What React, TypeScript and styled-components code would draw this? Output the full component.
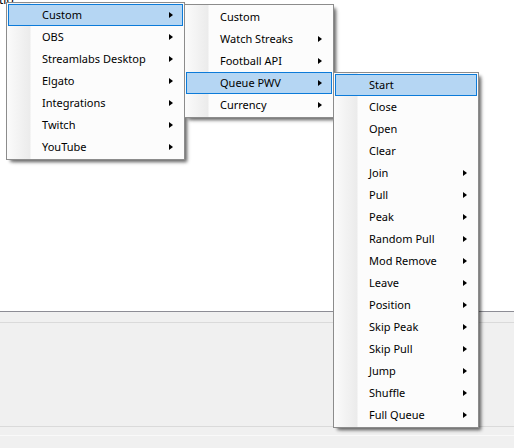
import React from 'react';
import styled, { createGlobalStyle } from 'styled-components';

const Global = createGlobalStyle`
  html, body { margin: 0; padding: 0; }
  body {
    width: 514px;
    height: 448px;
    overflow: hidden;
    font-family: "Segoe UI", "Noto Sans", "Liberation Sans", sans-serif;
    font-size: 11px;
    color: #000;
  }
`;

const Page = styled.div`
  position: relative;
  width: 514px;
  height: 448px;
  display: flex;
  flex-direction: column;
  background: #f0f0f0;
  overflow: hidden;
`;

const WorkArea = styled.div`
  height: 311px;
  flex: none;
  background: #ffffff;
  border-bottom: 1px solid #8d8d95;
  overflow: hidden;
`;

const Caption = styled.div`
  margin: -7px 0 0 -1px;
  line-height: 14px;
  font-size: 12px;
`;

const Strip = styled.div<{ $h: number; $line: string }>`
  flex: none;
  height: ${(p) => p.$h}px;
  border-bottom: 1px solid ${(p) => p.$line};
`;

const Rest = styled.div`
  flex: 1;
`;

const Menu = styled.div<{ $left: number; $top: number; $width: number; $z: number }>`
  position: absolute;
  left: ${(p) => p.$left}px;
  top: ${(p) => p.$top}px;
  width: ${(p) => p.$width}px;
  z-index: ${(p) => p.$z};
  box-sizing: border-box;
  display: flex;
  flex-direction: column;
  padding: 1px;
  border: 1px solid #8c8c8c;
  background: linear-gradient(to right, #fbfbfb 0px, #ebebeb 23px, #fcfcfc 24px) no-repeat, #fcfcfc;
  background-size: 24px 100%, auto;
  box-shadow: 3px 3px 3px -1px rgba(0, 0, 0, 0.45), 4px 4px 4px -2px rgba(0, 0, 0, 0.25);
`;

const Item = styled.div<{ $active?: boolean }>`
  box-sizing: border-box;
  height: 22px;
  display: flex;
  align-items: center;
  padding: 0 9px 1px 33px;
  border: 1px solid ${(p) => (p.$active ? '#0c7bd9' : 'transparent')};
  background: ${(p) => (p.$active ? '#b5d6f3' : 'transparent')};
  white-space: nowrap;
  line-height: 14px;
`;

const Label = styled.span`
  flex: 1;
`;

const Arrow = styled.span`
  width: 0;
  height: 0;
  margin-top: 1px;
  border-top: 3.5px solid transparent;
  border-bottom: 3.5px solid transparent;
  border-left: 4px solid #000;
`;

type Entry = { label: string; sub?: boolean; active?: boolean };

const mainItems: Entry[] = [
  { label: 'Custom', sub: true, active: true },
  { label: 'OBS', sub: true },
  { label: 'Streamlabs Desktop', sub: true },
  { label: 'Elgato', sub: true },
  { label: 'Integrations', sub: true },
  { label: 'Twitch', sub: true },
  { label: 'YouTube', sub: true },
];

const customItems: Entry[] = [
  { label: 'Custom' },
  { label: 'Watch Streaks', sub: true },
  { label: 'Football API', sub: true },
  { label: 'Queue PWV', sub: true, active: true },
  { label: 'Currency', sub: true },
];

const queueItems: Entry[] = [
  { label: 'Start', active: true },
  { label: 'Close' },
  { label: 'Open' },
  { label: 'Clear' },
  { label: 'Join', sub: true },
  { label: 'Pull', sub: true },
  { label: 'Peak', sub: true },
  { label: 'Random Pull', sub: true },
  { label: 'Mod Remove', sub: true },
  { label: 'Leave', sub: true },
  { label: 'Position', sub: true },
  { label: 'Skip Peak', sub: true },
  { label: 'Skip Pull', sub: true },
  { label: 'Jump', sub: true },
  { label: 'Shuffle', sub: true },
  { label: 'Full Queue', sub: true },
];

function DropDown({ items, left, top, width, z }: { items: Entry[]; left: number; top: number; width: number; z: number }) {
  return (
    <Menu $left={left} $top={top} $width={width} $z={z}>
      {items.map((it) => (
        <Item key={it.label} $active={it.active}>
          <Label>{it.label}</Label>
          {it.sub && <Arrow />}
        </Item>
      ))}
    </Menu>
  );
}

export default function App() {
  return (
    <>
      <Global />
      <Page>
        <WorkArea>
          <Caption>tio</Caption>
        </WorkArea>
        <Strip $h={10} $line="#dadada" />
        <Strip $h={103} $line="#dadada" />
        <Strip $h={8} $line="#f9f9f9" />
        <Rest />
        <DropDown items={mainItems} left={6} top={2} width={179} z={1} />
        <DropDown items={customItems} left={184} top={4} width={150} z={2} />
        <DropDown items={queueItems} left={333} top={72} width={146} z={3} />
      </Page>
    </>
  );
}
